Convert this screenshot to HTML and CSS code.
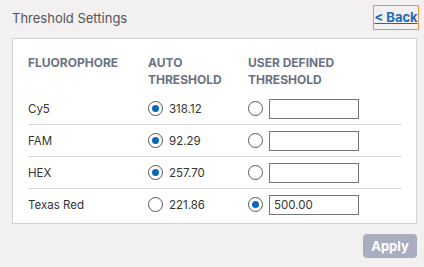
FILE: index.html
```html
<!DOCTYPE html>
<html lang="en">
<head>
    <meta charset="UTF-8">
    <meta name="viewport" content="width=device-width, initial-scale=1.0">
    <title>Threshold Settings</title>
    <link rel="stylesheet" href="styles.css">
</head>
<body>
    <div class="top-bar">
        <div class="page-title">Threshold Settings</div>
        <a class="back-link" href="#">&lt; Back</a>
    </div>

    <div class="panel">
        <div class="grid head">
            <div>FLUOROPHORE</div>
            <div>AUTO<br>THRESHOLD</div>
            <div>USER DEFINED<br>THRESHOLD</div>
        </div>

        <div class="grid row">
            <div>Cy5</div>
            <div class="opt"><span class="radio on"></span>318.12</div>
            <div class="opt"><span class="radio"></span><input type="text" class="value-box"></div>
        </div>
        <div class="grid row">
            <div>FAM</div>
            <div class="opt"><span class="radio on"></span>92.29</div>
            <div class="opt"><span class="radio"></span><input type="text" class="value-box"></div>
        </div>
        <div class="grid row">
            <div>HEX</div>
            <div class="opt"><span class="radio on"></span>257.70</div>
            <div class="opt"><span class="radio"></span><input type="text" class="value-box"></div>
        </div>
        <div class="grid row last">
            <div>Texas Red</div>
            <div class="opt"><span class="radio"></span>221.86</div>
            <div class="opt"><span class="radio on"></span><input type="text" class="value-box" value="500.00"></div>
        </div>
    </div>

    <div class="actions">
        <button class="apply-btn">Apply</button>
    </div>
</body>
</html>
```

FILE: styles.css
```css
body {
    margin: 0;
    background: #f2f0f1;
    font-family: Inter, "Noto Sans", sans-serif;
    color: #333;
    font-size: 11.5px;
}
.top-bar {
    display: flex;
    justify-content: space-between;
    align-items: center;
    padding: 5px 5px 0 12px;
    height: 25px;
}
.page-title {
    color: #555;
    font-size: 13px;
}
.back-link {
    display: block;
    width: 44px;
    height: 23px;
    line-height: 23px;
    text-align: center;
    border: 1px solid #f0914a;
    color: #1d69b4;
    font-weight: bold;
    font-size: 13px;
}
.panel {
    margin: 8px 7px 0 12px;
    height: 169px;
    padding: 15px 14px 0 15px;
    background: #fff;
    border: 1px solid #d2d2d2;
}
.grid {
    display: grid;
    grid-template-columns: 120px 100px 1fr;
}
.head {
    font-size: 12px;
    font-weight: bold;
    line-height: 17px;
    color: #6b7384;
    padding-bottom: 5px;
}
.row {
    height: 31px;
    align-items: center;
    border-bottom: 1px solid #dcdcdc;
}
.row.last {
    border-bottom: none;
}
.opt {
    display: flex;
    align-items: center;
}
.radio {
    width: 13px;
    height: 13px;
    border: 1px solid #555;
    border-radius: 50%;
    margin-right: 6px;
    display: flex;
    align-items: center;
    justify-content: center;
}
.radio.on::after {
    content: "";
    width: 7px;
    height: 7px;
    border-radius: 50%;
    background: #0b66c2;
}
.value-box {
    width: 90px;
    height: 20px;
    box-sizing: border-box;
    border: 1px solid #777;
    padding: 0 4px;
    font-family: inherit;
    font-size: 11.5px;
    color: #333;
}
.actions {
    display: flex;
    justify-content: flex-end;
    padding: 10px 7px 0 0;
}
.apply-btn {
    width: 54px;
    height: 24px;
    border: none;
    border-radius: 4px;
    background: #a8aec0;
    color: #fff;
    font-family: inherit;
    font-weight: bold;
    font-size: 13px;
}
```
